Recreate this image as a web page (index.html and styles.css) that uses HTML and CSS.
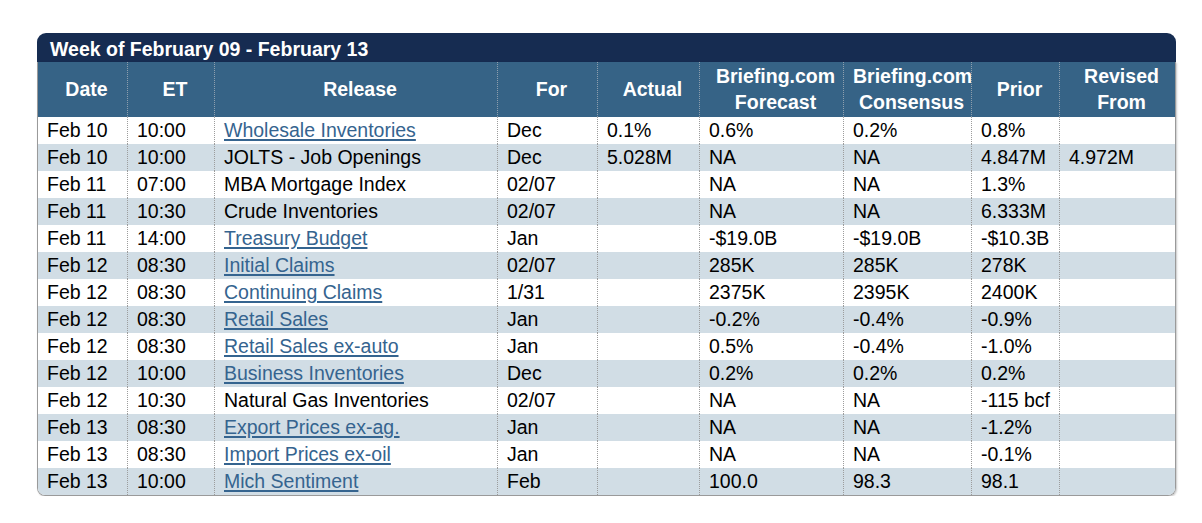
FILE: index.html
```html
<!DOCTYPE html>
<html lang="en">
<head>
<meta charset="utf-8">
<title>Economic Calendar</title>
<link rel="stylesheet" href="styles.css">
</head>
<body>
<div class="page">
  <div class="panel">
    <div class="panel-title">Week of February 09 - February 13</div>
    <div class="grid-wrap">
      <table class="cal">
        <colgroup>
          <col class="c-date">
          <col class="c-et">
          <col class="c-release">
          <col class="c-for">
          <col class="c-actual">
          <col class="c-forecast">
          <col class="c-consensus">
          <col class="c-prior">
          <col class="c-revised">
        </colgroup>
        <thead>
          <tr>
            <th>Date</th>
            <th>ET</th>
            <th>Release</th>
            <th>For</th>
            <th>Actual</th>
            <th>Briefing.com<br>Forecast</th>
            <th>Briefing.com<br>Consensus</th>
            <th>Prior</th>
            <th>Revised<br>From</th>
          </tr>
        </thead>
        <tbody>
          <tr><td>Feb 10</td><td>10:00</td><td><a href="#">Wholesale Inventories</a></td><td>Dec</td><td>0.1%</td><td>0.6%</td><td>0.2%</td><td>0.8%</td><td></td></tr>
          <tr><td>Feb 10</td><td>10:00</td><td>JOLTS - Job Openings</td><td>Dec</td><td>5.028M</td><td>NA</td><td>NA</td><td>4.847M</td><td>4.972M</td></tr>
          <tr><td>Feb 11</td><td>07:00</td><td>MBA Mortgage Index</td><td>02/07</td><td></td><td>NA</td><td>NA</td><td>1.3%</td><td></td></tr>
          <tr><td>Feb 11</td><td>10:30</td><td>Crude Inventories</td><td>02/07</td><td></td><td>NA</td><td>NA</td><td>6.333M</td><td></td></tr>
          <tr><td>Feb 11</td><td>14:00</td><td><a href="#">Treasury Budget</a></td><td>Jan</td><td></td><td>-$19.0B</td><td>-$19.0B</td><td>-$10.3B</td><td></td></tr>
          <tr><td>Feb 12</td><td>08:30</td><td><a href="#">Initial Claims</a></td><td>02/07</td><td></td><td>285K</td><td>285K</td><td>278K</td><td></td></tr>
          <tr><td>Feb 12</td><td>08:30</td><td><a href="#">Continuing Claims</a></td><td>1/31</td><td></td><td>2375K</td><td>2395K</td><td>2400K</td><td></td></tr>
          <tr><td>Feb 12</td><td>08:30</td><td><a href="#">Retail Sales</a></td><td>Jan</td><td></td><td>-0.2%</td><td>-0.4%</td><td>-0.9%</td><td></td></tr>
          <tr><td>Feb 12</td><td>08:30</td><td><a href="#">Retail Sales ex-auto</a></td><td>Jan</td><td></td><td>0.5%</td><td>-0.4%</td><td>-1.0%</td><td></td></tr>
          <tr><td>Feb 12</td><td>10:00</td><td><a href="#">Business Inventories</a></td><td>Dec</td><td></td><td>0.2%</td><td>0.2%</td><td>0.2%</td><td></td></tr>
          <tr><td>Feb 12</td><td>10:30</td><td>Natural Gas Inventories</td><td>02/07</td><td></td><td>NA</td><td>NA</td><td>-115 bcf</td><td></td></tr>
          <tr><td>Feb 13</td><td>08:30</td><td><a href="#">Export Prices ex-ag.</a></td><td>Jan</td><td></td><td>NA</td><td>NA</td><td>-1.2%</td><td></td></tr>
          <tr><td>Feb 13</td><td>08:30</td><td><a href="#">Import Prices ex-oil</a></td><td>Jan</td><td></td><td>NA</td><td>NA</td><td>-0.1%</td><td></td></tr>
          <tr><td>Feb 13</td><td>10:00</td><td><a href="#">Mich Sentiment</a></td><td>Feb</td><td></td><td>100.0</td><td>98.3</td><td>98.1</td><td></td></tr>
        </tbody>
      </table>
    </div>
  </div>
</div>
</body>
</html>
```

FILE: styles.css
```css
html, body {
  margin: 0;
  padding: 0;
  background: #ffffff;
}

body {
  font-family: "Liberation Sans", Arial, sans-serif;
  font-size: 19.5px;
  color: #000000;
}

.page {
  padding: 33px 0 0 37px;
}

.panel {
  width: 1139px;
}

.panel-title {
  background: #162c51;
  color: #ffffff;
  font-weight: bold;
  line-height: 25px;
  padding: 4px 13px 0;
  border-radius: 9px 9px 0 0;
}

.grid-wrap {
  border: 1px solid #9a9a9a;
  border-top: none;
  border-radius: 0 0 8px 8px;
  overflow: hidden;
  box-shadow: 1px 1px 2px rgba(0, 0, 0, 0.22);
}

.cal {
  width: 100%;
  table-layout: fixed;
  border-collapse: separate;
  border-spacing: 0;
}

.c-date { width: 89px; }
.c-et { width: 87px; }
.c-release { width: 283px; }
.c-for { width: 100px; }
.c-actual { width: 102px; }
.c-forecast { width: 144px; }
.c-consensus { width: 128px; }
.c-prior { width: 88px; }
.c-revised { width: 116px; }

.cal th,
.cal td {
  box-sizing: border-box;
  border-left: 1px dotted #9c9c9c;
  white-space: nowrap;
  overflow: hidden;
}

.cal th:first-child,
.cal td:first-child {
  border-left: none;
}

.cal thead tr {
  background: #366386;
}

.cal th {
  height: 55px;
  color: #ffffff;
  font-weight: bold;
  text-align: center;
  line-height: 26px;
  padding: 0 1px 1px 9px;
  border-left-color: #8e9fae;
}

.cal td {
  height: 27px;
  line-height: 25px;
  padding: 0 4px 1px 9px;
  text-align: left;
  vertical-align: middle;
}

.cal td:first-child {
  padding-left: 9px;
}

.cal tbody tr:nth-child(even) {
  background: #d1dde5;
}

.cal a {
  color: #35648f;
  text-decoration: underline;
  text-decoration-thickness: 2px;
  text-underline-offset: 2px;
}
```
